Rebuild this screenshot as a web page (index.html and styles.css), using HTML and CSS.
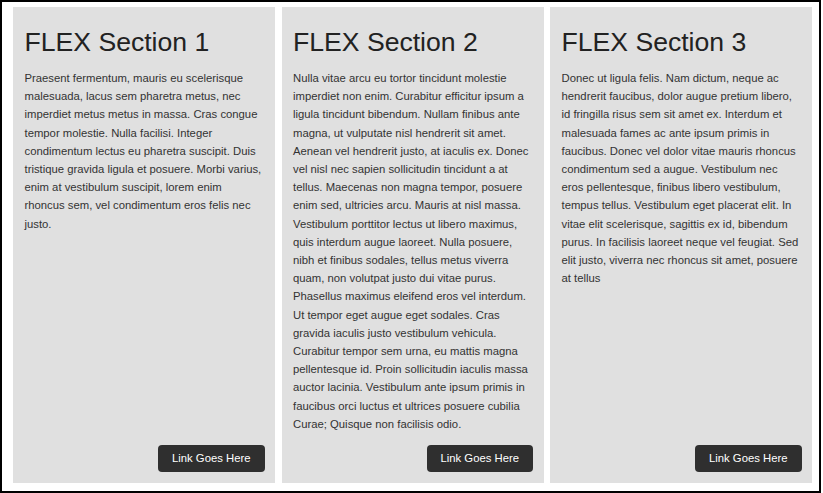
FILE: index.html
```html
<!DOCTYPE html>
<html>
<head>
<meta charset="utf-8">
<link rel="stylesheet" href="styles.css">
</head>
<body>
<div class="page">
  <section class="col">
    <h1>FLEX Section 1</h1>
    <p>Praesent fermentum, mauris eu scelerisque malesuada, lacus sem pharetra metus, nec imperdiet metus metus in massa. Cras congue tempor molestie. Nulla facilisi. Integer condimentum lectus eu pharetra suscipit. Duis tristique gravida ligula et posuere. Morbi varius, enim at vestibulum suscipit, lorem enim rhoncus sem, vel condimentum eros felis nec justo.</p>
    <a class="btn" href="#">Link Goes Here</a>
  </section>
  <section class="col">
    <h1>FLEX Section 2</h1>
    <p>Nulla vitae arcu eu tortor tincidunt molestie imperdiet non enim. Curabitur efficitur ipsum a ligula tincidunt bibendum. Nullam finibus ante magna, ut vulputate nisl hendrerit sit amet. Aenean vel hendrerit justo, at iaculis ex. Donec vel nisl nec sapien sollicitudin tincidunt a at tellus. Maecenas non magna tempor, posuere enim sed, ultricies arcu. Mauris at nisl massa. Vestibulum porttitor lectus ut libero maximus, quis interdum augue laoreet. Nulla posuere, nibh et finibus sodales, tellus metus viverra quam, non volutpat justo dui vitae purus. Phasellus maximus eleifend eros vel interdum. Ut tempor eget augue eget sodales. Cras gravida iaculis justo vestibulum vehicula. Curabitur tempor sem urna, eu mattis magna pellentesque id. Proin sollicitudin iaculis massa auctor lacinia. Vestibulum ante ipsum primis in faucibus orci luctus et ultrices posuere cubilia Curae; Quisque non facilisis odio.</p>
    <a class="btn" href="#">Link Goes Here</a>
  </section>
  <section class="col">
    <h1>FLEX Section 3</h1>
    <p>Donec ut ligula felis. Nam dictum, neque ac hendrerit faucibus, dolor augue pretium libero, id fringilla risus sem sit amet ex. Interdum et malesuada fames ac ante ipsum primis in faucibus. Donec vel dolor vitae mauris rhoncus condimentum sed a augue. Vestibulum nec eros pellentesque, finibus libero vestibulum, tempus tellus. Vestibulum eget placerat elit. In vitae elit scelerisque, sagittis ex id, bibendum purus. In facilisis laoreet neque vel feugiat. Sed elit justo, viverra nec rhoncus sit amet, posuere at tellus</p>
    <a class="btn" href="#">Link Goes Here</a>
  </section>
</div>
</body>
</html>
```

FILE: styles.css
```css
html, body {
  margin: 0;
  padding: 0;
  background: #fff;
}
body {
  font-family: "Liberation Sans", Arial, sans-serif;
}
.page {
  box-sizing: border-box;
  width: 821px;
  height: 493px;
  border: 2px solid #000;
  padding: 5px 7px 8px 11px;
  display: flex;
  gap: 6.5px;
}
.col {
  flex: 1 1 0;
  background: #e0e0e0;
  display: flex;
  flex-direction: column;
  padding: 0 10.5px 11px 11.5px;
  min-width: 0;
}
.col h1 {
  margin: 20px 0 0;
  font-size: 26.6px;
  font-weight: normal;
  color: #222;
  line-height: normal;
}
.col p {
  margin: 11px 0 12px;
  font-size: 11.3px;
  line-height: 18.2px;
  color: #333;
}
.btn {
  margin-top: auto;
  align-self: flex-end;
  background: #2f2f2f;
  color: #fff;
  text-decoration: none;
  font-size: 11.3px;
  height: 27px;
  line-height: 27px;
  padding: 0 14px;
  border-radius: 4px;
}
```
